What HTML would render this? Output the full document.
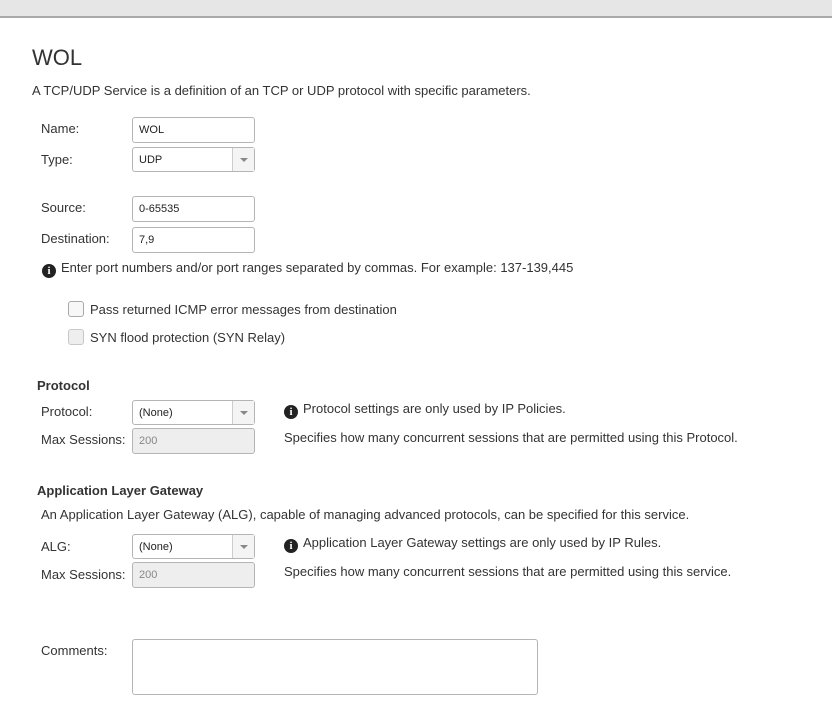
<!DOCTYPE html>
<html><head><style>
body{margin:0;width:832px;height:720px;background:#fff;font-family:"Liberation Sans",Arial,sans-serif;color:#333;position:relative;overflow:hidden;font-size:13px}
.a{position:absolute;white-space:nowrap}
.top{position:absolute;left:0;top:0;width:832px;height:16px;background:#e6e6e6;border-bottom:2px solid #a9a9a9}
.in{position:absolute;left:132px;border:1px solid #b5b5b5;border-radius:3px;background:#fff;font-size:11px;line-height:24px;padding-left:6px;box-sizing:border-box;width:123px;height:26px;color:#222}
.sel{height:25px}
.sel .ar{position:absolute;right:0;top:0;width:21px;height:100%;border-left:1px solid #ccc;background:#f4f4f4}
.sel .ar:after{content:"";position:absolute;left:7px;top:10px;border-left:4px solid transparent;border-right:4px solid transparent;border-top:4px solid #888}
.dis{background:#eee;color:#888}
.cb{position:absolute;left:68px;width:14px;height:14px;border:1px solid #aaa;border-radius:3px;background:#f7f7f7}
.i{display:inline-block;width:14px;height:14px;border-radius:50%;background:#222;color:#fff;font:bold 11px/14px "Liberation Serif",serif;text-align:center;vertical-align:-2px;margin-right:5px}
</style></head><body>
<div class="top"></div>
<div class="a" style="left:32px;top:45px;font-size:22px;color:#333">WOL</div>
<div class="a" style="left:32px;top:83px">A TCP/UDP Service is a definition of an TCP or UDP protocol with specific parameters.</div>

<div class="a" style="left:41px;top:121px">Name:</div>
<div class="in" style="top:117px">WOL</div>
<div class="a" style="left:41px;top:152px">Type:</div>
<div class="in sel" style="top:147px">UDP<span class="ar"></span></div>

<div class="a" style="left:41px;top:200px">Source:</div>
<div class="in" style="top:196px">0-65535</div>
<div class="a" style="left:41px;top:231px">Destination:</div>
<div class="in" style="top:227px">7,9</div>

<div class="a" style="left:42px;top:260px"><span class="i">i</span>Enter port numbers and/or port ranges separated by commas. For example: 137-139,445</div>

<div class="cb" style="top:301px"></div>
<div class="a" style="left:90px;top:302px">Pass returned ICMP error messages from destination</div>
<div class="cb" style="top:329px;background:#eee;border-color:#c8c8c8"></div>
<div class="a" style="left:90px;top:330px">SYN flood protection (SYN Relay)</div>

<div class="a" style="left:37px;top:378px;font-weight:bold">Protocol</div>
<div class="a" style="left:41px;top:404px">Protocol:</div>
<div class="in sel" style="top:400px">(None)<span class="ar"></span></div>
<div class="a" style="left:41px;top:432px">Max Sessions:</div>
<div class="in dis" style="top:428px">200</div>
<div class="a" style="left:284px;top:401px"><span class="i">i</span>Protocol settings are only used by IP Policies.</div>
<div class="a" style="left:284px;top:430px">Specifies how many concurrent sessions that are permitted using this Protocol.</div>

<div class="a" style="left:37px;top:483px;font-weight:bold">Application Layer Gateway</div>
<div class="a" style="left:41px;top:507px">An Application Layer Gateway (ALG), capable of managing advanced protocols, can be specified for this service.</div>
<div class="a" style="left:41px;top:539px">ALG:</div>
<div class="in sel" style="top:534px">(None)<span class="ar"></span></div>
<div class="a" style="left:41px;top:567px">Max Sessions:</div>
<div class="in dis" style="top:562px">200</div>
<div class="a" style="left:284px;top:535px"><span class="i">i</span>Application Layer Gateway settings are only used by IP Rules.</div>
<div class="a" style="left:284px;top:564px">Specifies how many concurrent sessions that are permitted using this service.</div>

<div class="a" style="left:41px;top:643px">Comments:</div>
<div class="in" style="top:639px;width:406px;height:56px"></div>
</body></html>
